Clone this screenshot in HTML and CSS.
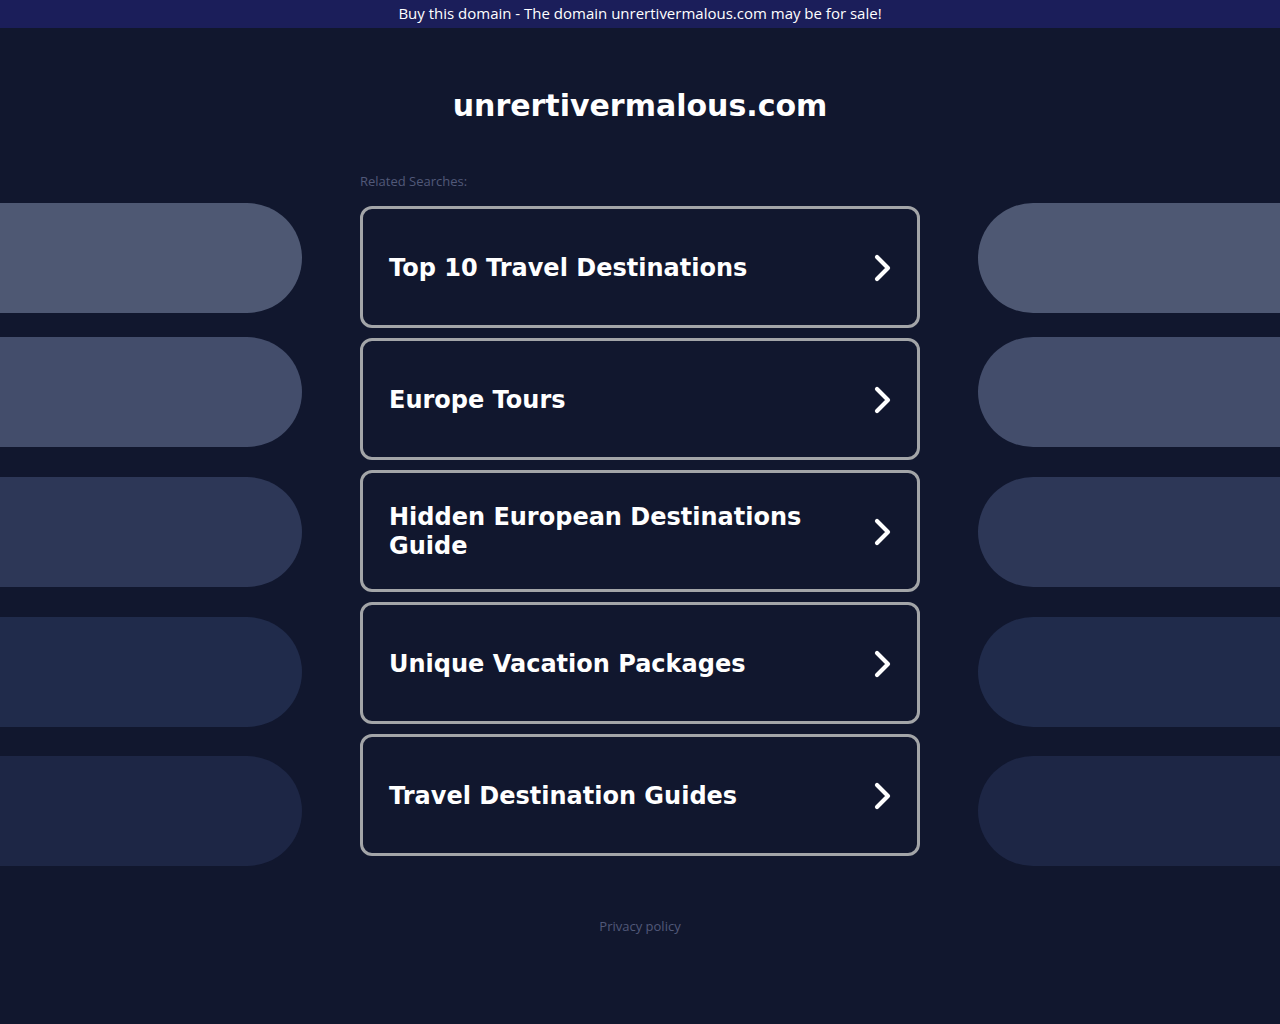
FILE: index.html
```html
<!DOCTYPE html>
<html lang="en">
<head>
<meta charset="utf-8">
<title>unrertivermalous.com</title>
<link rel="stylesheet" href="styles.css">
</head>
<body>
<div class="topbar">Buy this domain - The domain unrertivermalous.com may be for sale!</div>
<h1 class="title">unrertivermalous.com</h1>
<main class="layout">
  <div class="side side-left">
    <div class="pill p1"></div>
    <div class="pill p2"></div>
    <div class="pill p3"></div>
    <div class="pill p4"></div>
    <div class="pill p5"></div>
  </div>
  <div class="center">
    <div class="label">Related Searches:</div>
    <div class="cards">
      <a class="card" href="#"><span class="card-text">Top 10 Travel Destinations</span><svg class="chev" viewBox="0 0 20 30" width="20" height="30"><path d="M4 4 L15 15 L4 26" fill="none" stroke="#fff" stroke-width="4.2" stroke-linecap="round" stroke-linejoin="round"/></svg></a>
      <a class="card" href="#"><span class="card-text">Europe Tours</span><svg class="chev" viewBox="0 0 20 30" width="20" height="30"><path d="M4 4 L15 15 L4 26" fill="none" stroke="#fff" stroke-width="4.2" stroke-linecap="round" stroke-linejoin="round"/></svg></a>
      <a class="card" href="#"><span class="card-text">Hidden European Destinations Guide</span><svg class="chev" viewBox="0 0 20 30" width="20" height="30"><path d="M4 4 L15 15 L4 26" fill="none" stroke="#fff" stroke-width="4.2" stroke-linecap="round" stroke-linejoin="round"/></svg></a>
      <a class="card" href="#"><span class="card-text">Unique Vacation Packages</span><svg class="chev" viewBox="0 0 20 30" width="20" height="30"><path d="M4 4 L15 15 L4 26" fill="none" stroke="#fff" stroke-width="4.2" stroke-linecap="round" stroke-linejoin="round"/></svg></a>
      <a class="card" href="#"><span class="card-text">Travel Destination Guides</span><svg class="chev" viewBox="0 0 20 30" width="20" height="30"><path d="M4 4 L15 15 L4 26" fill="none" stroke="#fff" stroke-width="4.2" stroke-linecap="round" stroke-linejoin="round"/></svg></a>
    </div>
  </div>
  <div class="side side-right">
    <div class="pill p1"></div>
    <div class="pill p2"></div>
    <div class="pill p3"></div>
    <div class="pill p4"></div>
    <div class="pill p5"></div>
  </div>
</main>
<footer class="footer"><a href="#" class="privacy">Privacy policy</a></footer>
</body>
</html>
```

FILE: styles.css
```css
html, body {
  margin: 0;
  padding: 0;
  background: #11172e;
  min-height: 100%;
}
body {
  font-family: "DejaVu Sans", sans-serif;
  color: #fff;
}
.topbar {
  box-sizing: border-box;
  height: 28px;
  padding-bottom: 2px;
  background: #1b1e5a;
  color: #fff;
  font-family: "Open Sans", "DejaVu Sans", sans-serif;
  font-size: 15px;
  font-weight: 500;
  line-height: 26px;
  text-align: center;
}
.title {
  margin: 60px 0 0;
  font-size: 30px;
  line-height: 36px;
  font-weight: bold;
  text-align: center;
  color: #fff;
}
.layout {
  display: grid;
  grid-template-columns: 302px 1fr 302px;
  margin-top: 49px;
}
.side {
  display: flex;
  flex-direction: column;
  padding-top: 30px;
}
.pill {
  height: 110px;
}
.p2 { margin-top: 24px; }
.p3, .p4 { margin-top: 30px; }
.p5 { margin-top: 29px; }
.side-left .pill { border-radius: 0 55px 55px 0; }
.side-right .pill { border-radius: 55px 0 0 55px; }
.p1 { background: #4e5873; }
.p2 { background: #434d6b; }
.p3 { background: #2d3757; }
.p4 { background: #202b4b; }
.p5 { background: #1d2645; }
.center {
  display: flex;
  flex-direction: column;
  align-items: center;
}
.label {
  width: 560px;
  font-family: "Open Sans", "DejaVu Sans", sans-serif;
  font-size: 13px;
  line-height: 16px;
  color: #515979;
}
.cards {
  margin-top: 17px;
  display: flex;
  flex-direction: column;
  gap: 10px;
  width: 560px;
}
.card {
  box-sizing: border-box;
  height: 122px;
  border: 3px solid #a3a5a8;
  border-radius: 12px;
  display: flex;
  align-items: center;
  justify-content: space-between;
  padding: 2px 24px 0 26px;
  text-decoration: none;
  color: #fff;
}
.card-text {
  font-size: 24px;
  font-weight: bold;
  line-height: 29px;
  max-width: 440px;
}
.chev {
  flex: none;
}
.footer {
  text-align: center;
  margin-top: 50px;
  padding-bottom: 80px;
}
.privacy {
  font-family: "Open Sans", "DejaVu Sans", sans-serif;
  font-size: 13px;
  line-height: 16px;
  color: #515979;
  text-decoration: none;
}
```
